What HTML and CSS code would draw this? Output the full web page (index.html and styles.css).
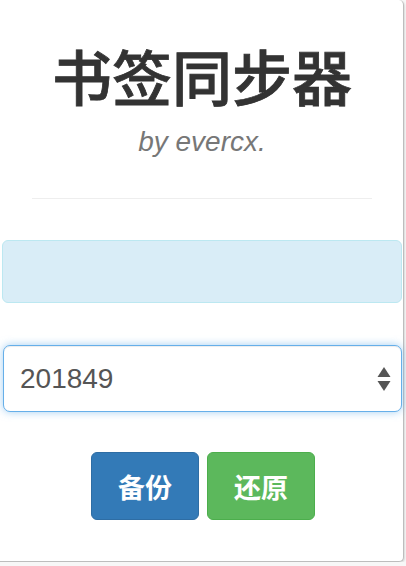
FILE: index.html
```html
<!DOCTYPE html>
<html lang="zh">
<head>
<meta charset="utf-8">
<title>书签同步器</title>
<link rel="stylesheet" href="styles.css">
</head>
<body>
<div class="panel">
  <h1 class="title">书签同步器</h1>
  <p class="byline">by evercx.</p>
  <hr class="rule">
  <div class="alert"></div>
  <div class="select">
    <span class="select-value">201849</span>
    <svg class="select-arrows" width="14" height="26" viewBox="0 0 14 26" aria-hidden="true">
      <polygon points="7,1 13.5,11 0.5,11" fill="#555"/>
      <polygon points="0.5,15 13.5,15 7,25" fill="#555"/>
    </svg>
  </div>
  <div class="actions">
    <button class="btn btn-primary">备份</button>
    <button class="btn btn-success">还原</button>
  </div>
</div>
</body>
</html>
```
FILE: styles.css
```css
html, body {
  margin: 0;
  padding: 0;
  background: #f7f7f7;
  font-family: "Liberation Sans", Arial, "Noto Sans CJK SC", sans-serif;
  color: #333;
}

.panel {
  box-sizing: border-box;
  width: 404px;
  height: 562px;
  background: #fff;
  border-right: 1px solid #bdbdbd;
  border-bottom: 1px solid #bdbdbd;
  border-radius: 0 5px 5px 0;
  padding: 0 1px 0 2px;
  display: flex;
  flex-direction: column;
  box-shadow: 1px 1px 2px rgba(0,0,0,0.12);
}

.title {
  margin: 42px 0 0;
  font-family: "Noto Sans CJK SC", "Noto Sans CJK JP", sans-serif;
  font-size: 60px;
  font-weight: 500;
  -webkit-text-stroke: 0.8px #333;
  line-height: 66px;
  text-align: center;
  color: #333;
}

.byline {
  margin: 18px 0 0;
  font-size: 28px;
  line-height: 31px;
  font-style: italic;
  text-align: center;
  color: #777;
}

.rule {
  margin: 41px 30px 0;
  border: 0;
  border-top: 1px solid #eee;
  height: 0;
}

.alert {
  box-sizing: border-box;
  margin-top: 41px;
  height: 63px;
  background: #d9edf7;
  border: 1px solid #bce8f1;
  border-radius: 6px;
}

.select {
  box-sizing: border-box;
  margin: 42px 0 0 1px;
  height: 67px;
  display: flex;
  align-items: center;
  justify-content: space-between;
  padding: 0 10px 0 16px;
  border: 1.5px solid #66afe9;
  border-radius: 7px;
  box-shadow: inset 0 1px 1px rgba(0,0,0,0.075), 0 0 8px rgba(102,175,233,0.6);
  background: #fff;
}

.select-value {
  font-size: 28px;
  color: #555;
}

.select-arrows {
  display: block;
}

.actions {
  margin-top: 40px;
  display: flex;
  justify-content: center;
  gap: 8px;
  padding-left: 2px;
}

.btn {
  box-sizing: border-box;
  width: 108px;
  height: 68px;
  border-radius: 6px;
  font-family: "Noto Sans CJK SC", sans-serif;
  font-size: 27px;
  font-weight: 700;
  color: #fff;
  cursor: pointer;
  padding: 0;
}

.btn-primary {
  background: #337ab7;
  border: 1px solid #2e6da4;
}

.btn-success {
  background: #5cb85c;
  border: 1px solid #4cae4c;
}
```
